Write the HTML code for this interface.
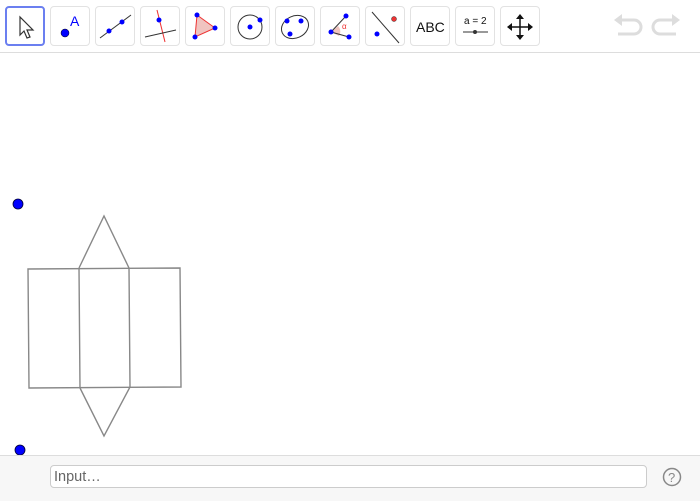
<!DOCTYPE html>
<html><head><style>
body{margin:0;width:700px;height:500px;background:#fff;font-family:"Liberation Sans",sans-serif;position:relative;overflow:hidden}
.tb{position:absolute;left:0;top:0;width:700px;height:52px;background:#fff;border-bottom:1px solid #ddd}
.b{position:absolute;top:6px;width:38px;height:38px;border:1px solid #e2e2e2;border-radius:4px;background:#fff}
.b svg{position:absolute;left:0;top:0}
.sel{border:2px solid #6b7ff0;width:36px;height:36px}
.bot{position:absolute;left:0;top:455px;width:700px;height:45px;background:#f7f7f7;border-top:1px solid #ddd}
.inp{position:absolute;left:50px;top:9px;width:597px;height:23px;background:#fff;border:1px solid #ccc;border-radius:4px;font-size:14.5px;color:#666;line-height:23px;padding-left:3px;box-sizing:border-box}
</style></head><body>
<div class="tb">
<div class="b sel" style="left:5px"><svg width="36" height="36"><path d="M13 9 L13 27 L17 23 L20 30 L23 29 L20 22 L26 22 Z" fill="#fff" stroke="#333" stroke-width="1.2"/></svg></div>
<div class="b" style="left:50px"><svg width="38" height="38"><circle cx="14" cy="26" r="4" fill="#00f" stroke="#000" stroke-width=".5"/><text x="19" y="19" font-size="14" fill="#00f" font-family="Liberation Sans">A</text></svg></div>
<div class="b" style="left:95px"><svg width="38" height="38"><line x1="4" y1="31" x2="35" y2="8" stroke="#333"/><circle cx="13" cy="24" r="2.5" fill="#00f"/><circle cx="26" cy="15" r="2.5" fill="#00f"/></svg></div>
<div class="b" style="left:140px"><svg width="38" height="38"><line x1="16" y1="3" x2="24" y2="35" stroke="#e33"/><line x1="4" y1="30" x2="35" y2="23" stroke="#333"/><circle cx="18" cy="13" r="2.5" fill="#00f"/></svg></div>
<div class="b" style="left:185px"><svg width="38" height="38"><path d="M11 8 L29 21 L9 30 Z" fill="#f0c4c0" stroke="#e33"/><circle cx="11" cy="8" r="2.5" fill="#00f"/><circle cx="29" cy="21" r="2.5" fill="#00f"/><circle cx="9" cy="30" r="2.5" fill="#00f"/></svg></div>
<div class="b" style="left:230px"><svg width="38" height="38"><circle cx="19" cy="20" r="12" fill="none" stroke="#333"/><circle cx="19" cy="20" r="2.5" fill="#00f"/><circle cx="29" cy="13" r="2.5" fill="#00f"/></svg></div>
<div class="b" style="left:275px"><svg width="38" height="38"><ellipse cx="19" cy="20" rx="14" ry="11" transform="rotate(-25 19 20)" fill="none" stroke="#333"/><circle cx="11" cy="14" r="2.5" fill="#00f"/><circle cx="25" cy="14" r="2.5" fill="#00f"/><circle cx="14" cy="27" r="2.5" fill="#00f"/></svg></div>
<div class="b" style="left:320px"><svg width="38" height="38"><path d="M10 25 L17 19 A8 8 0 0 1 18 29 Z" fill="#f0c4c0"/><line x1="10" y1="25" x2="25" y2="9" stroke="#333"/><line x1="10" y1="25" x2="28" y2="30" stroke="#333"/><circle cx="10" cy="25" r="2.5" fill="#00f"/><circle cx="25" cy="9" r="2.5" fill="#00f"/><circle cx="28" cy="30" r="2.5" fill="#00f"/><text x="21" y="22" font-size="8" fill="#e33">α</text></svg></div>
<div class="b" style="left:365px"><svg width="38" height="38"><line x1="6" y1="5" x2="33" y2="36" stroke="#333"/><circle cx="28" cy="12" r="2.5" fill="#e33" stroke="#333" stroke-width=".5"/><circle cx="11" cy="27" r="2.5" fill="#00f"/></svg></div>
<div class="b" style="left:410px"><svg width="38" height="38"><text x="5" y="25" font-size="14" fill="#111" font-family="Liberation Sans">ABC</text></svg></div>
<div class="b" style="left:455px"><svg width="38" height="38"><text x="8" y="17" font-size="10" fill="#111" font-family="Liberation Sans">a = 2</text><line x1="7" y1="25" x2="32" y2="25" stroke="#333"/><circle cx="19" cy="25" r="2" fill="#333"/></svg></div>
<div class="b" style="left:500px"><svg width="38" height="38"><g stroke="#111" stroke-width="1.5"><line x1="19" y1="10" x2="19" y2="30"/><line x1="9" y1="20" x2="29" y2="20"/></g><g fill="#111"><path d="M19 7 L15 12 L23 12Z"/><path d="M19 33 L15 28 L23 28Z"/><path d="M6 20 L11 16 L11 24Z"/><path d="M32 20 L27 16 L27 24Z"/></g></svg></div>
<svg style="position:absolute;left:612px;top:12px" width="70" height="30"><g fill="none" stroke="#ddd" stroke-width="3"><path d="M8 8 H22 A7 7 0 0 1 22 22 H6"/><path d="M62 8 H48 A7 7 0 0 0 48 22 H64"/></g><path d="M2 8 L10 2 L10 14Z" fill="#ddd"/><path d="M68 8 L60 2 L60 14Z" fill="#ddd"/></svg>
</div>
<svg style="position:absolute;left:0;top:0" width="700" height="500">
<g fill="none" stroke="#888" stroke-width="1.4">
<path d="M28 269 L180 268 L181 387 L29 388 Z"/>
<path d="M79 268 L80 388 M129 268 L130 387"/>
<path d="M79 268 L104 216 L129 268"/>
<path d="M80 388 L104 436 L130 387"/>
</g>
<circle cx="18" cy="204" r="5" fill="#00f" stroke="#003" stroke-width=".8"/>
<circle cx="20" cy="450" r="5" fill="#00f" stroke="#003" stroke-width=".8"/>
</svg>
<div class="bot"><div class="inp">Input…</div>
<svg style="position:absolute;left:662px;top:11px" width="22" height="22"><circle cx="10" cy="10" r="8.5" fill="none" stroke="#888" stroke-width="1.5"/><text x="6" y="15" font-size="13" fill="#888" font-family="Liberation Sans">?</text></svg>
</div>
</body></html>
